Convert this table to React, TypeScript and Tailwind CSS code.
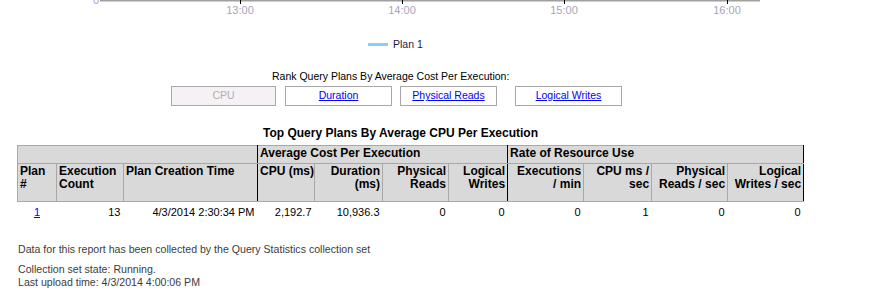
import React from 'react';

const ticks = [
    { x: 240, label: '13:00' },
    { x: 402, label: '14:00' },
    { x: 564, label: '15:00' },
    { x: 727, label: '16:00' },
];

const colWidths = [39, 67, 134, 57, 68, 66, 59, 76, 68, 76, 76];

const hdr = 'bg-[#d9d9d9] font-bold text-[12px] text-black align-top px-[2px] pt-[1px] leading-[13px] whitespace-nowrap';

// second header row: label lines, alignment, thick right edge
const columns: { lines: string[]; right?: boolean; thick?: boolean }[] = [
    { lines: ['Plan', '#'] },
    { lines: ['Execution', 'Count'] },
    { lines: ['Plan Creation Time'], thick: true },
    { lines: ['CPU (ms)'] },
    { lines: ['Duration', '(ms)'], right: true },
    { lines: ['Physical', 'Reads'], right: true },
    { lines: ['Logical', 'Writes'], right: true, thick: true },
    { lines: ['Executions', '/ min'], right: true },
    { lines: ['CPU ms /', 'sec'], right: true },
    { lines: ['Physical', 'Reads / sec'], right: true },
    { lines: ['Logical', 'Writes / sec'], right: true, thick: true },
];

const values = ['13', '4/3/2014 2:30:34 PM', '2,192.7', '10,936.3', '0', '0', '0', '1', '0', '0'];

function AxisStrip() {
    return (
        <svg width="879" height="20" className="block">
            <line x1="100" y1="0.5" x2="760" y2="0.5" stroke="#a0a0a0" strokeWidth="2" />
            {ticks.map((t) => (
                <line key={t.x} x1={t.x + 0.5} y1="0" x2={t.x + 0.5} y2="4" stroke="#000" />
            ))}
            <text x="96" y="4" fontSize="11" fill="#a8a4bc" textAnchor="middle" fontFamily="Liberation Sans, sans-serif">0</text>
            {ticks.map((t) => (
                <text key={t.label} x={t.x} y="14" fontSize="11" fill="#a8a4bc" textAnchor="middle" fontFamily="Liberation Sans, sans-serif">
                    {t.label}
                </text>
            ))}
        </svg>
    );
}

function RankButton({ label, active, className }: { label: string; active?: boolean; className: string }) {
    return (
        <div
            className={`h-[20px] border border-[#a8a8a8] flex items-center justify-center text-[10.5px] ${
                active ? 'bg-[#f5f1f5] text-[#b0b0b0]' : 'bg-white text-[#0000ff] underline'
            } ${className}`}
        >
            {label}
        </div>
    );
}

export default function App() {
    return (
        <div className="w-[879px] h-[300px] bg-white overflow-hidden text-[11px] text-black" style={{ fontFamily: '"Liberation Sans", Arial, sans-serif' }}>
            <AxisStrip />

            {/* legend */}
            <div className="mt-[17px] h-[14px] pl-[368px] flex items-center gap-[5px]">
                <span className="w-[20px] h-[3px] bg-[#87cefa]" />
                <span className="text-[#1a1a4a] text-[10.5px] leading-[14px]">Plan 1</span>
            </div>

            <div className="mt-[18px] h-[14px] leading-[14px] pl-[272px] text-[10.5px]">Rank Query Plans By Average Cost Per Execution:</div>

            <div className="mt-[3px] flex pl-[171px]">
                <RankButton label="CPU" active className="w-[105px]" />
                <RankButton label="Duration" className="w-[107px] ml-[9px]" />
                <RankButton label="Physical Reads" className="w-[97px] ml-[8px]" />
                <RankButton label="Logical Writes" className="w-[107px] ml-[18px]" />
            </div>

            <div className="mt-[20px] h-[14px] leading-[14px] pl-[263px] font-bold text-[12px]">Top Query Plans By Average CPU Per Execution</div>

            <table className="mt-[5px] ml-[17px] table-fixed border-collapse w-[787px]">
                <colgroup>
                    {colWidths.map((w, i) => (
                        <col key={i} style={{ width: w }} />
                    ))}
                </colgroup>
                <thead>
                    <tr className="h-[18px]">
                        <th colSpan={3} className={`${hdr} border border-[#a8a8a8] border-r-black text-left`}></th>
                        <th colSpan={4} className={`${hdr} border border-[#a8a8a8] border-r-black text-left align-middle pt-0`}>Average Cost Per Execution</th>
                        <th colSpan={4} className={`${hdr} border border-[#a8a8a8] border-r-black text-left align-middle pt-0`}>Rate of Resource Use</th>
                    </tr>
                    <tr className="h-[38px]">
                        {columns.map((c, i) => (
                            <th
                                key={i}
                                className={`${hdr} border border-[#a8a8a8] ${c.thick ? 'border-r-black' : ''} ${c.right ? 'text-right' : 'text-left'}`}
                            >
                                {c.lines.map((l, j) => (
                                    <div key={j}>{l}</div>
                                ))}
                            </th>
                        ))}
                    </tr>
                </thead>
                <tbody>
                    <tr className="h-[20px] text-right">
                        <td className="text-center">
                            <span className="text-[#0000ff] underline">1</span>
                        </td>
                        {values.map((v, i) => (
                            <td key={i} className="pr-[3px]">{v}</td>
                        ))}
                    </tr>
                </tbody>
            </table>

            <div className="pl-[18px] text-[#3c3c3c] text-[10.6px] leading-[13px]">
                <div className="mt-[21px]">Data for this report has been collected by the Query Statistics collection set</div>
                <div className="mt-[7px]">Collection set state: Running.</div>
                <div>Last upload time: 4/3/2014 4:00:06 PM</div>
            </div>
        </div>
    );
}
